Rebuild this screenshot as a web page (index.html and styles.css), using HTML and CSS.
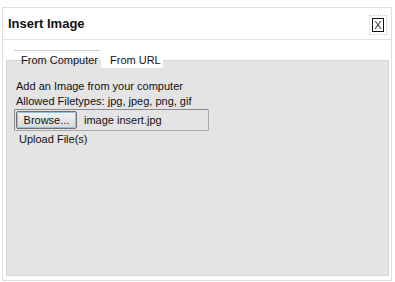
FILE: index.html
```html
<!DOCTYPE html>
<html lang="en">
<head>
  <meta charset="UTF-8" />
  <title>Insert Image</title>
  <link rel="stylesheet" href="styles.css">
</head>
<body>
  <div class="dialog">
    <div class="header">
      <h1>Insert Image</h1>
      <button class="fechar">X</button>
    </div>
    <div class="corpo">
      <div class="abas">
        <span class="aba ativa">From Computer</span>
        <span class="aba">From URL</span>
      </div>
      <div class="painel">
        <p>Add an Image from your computer</p>
        <p>Allowed Filetypes: jpg, jpeg, png, gif</p>
        <div class="arquivo">
          <button class="browse">Browse...</button>
          <span class="nome">image insert.jpg</span>
        </div>
        <p class="upload">Upload File(s)</p>
      </div>
    </div>
  </div>
</body>
</html>
```

FILE: styles.css
```css
body {
  margin: 0;
  padding: 0;
  background-color: white;
  color: #111;
  font-family: 'Liberation Sans', Arial, sans-serif;
  font-size: 11px;
}

.dialog {
  margin: 7px 3px 0 2px;
  height: 274px;
  border: 1px solid #dedede;
  box-sizing: border-box;
  display: flex;
  flex-direction: column;
}

.header {
  height: 31px;
  display: flex;
  align-items: center;
  justify-content: space-between;
  padding: 0 7px 0 5px;
  border-bottom: 1px solid #e2e2e2;
}

.header h1 {
  margin: 0;
  font-size: 13px;
  font-weight: bold;
  color: #111;
}

.fechar {
  width: 12px;
  height: 14px;
  padding: 0;
  border: 1px solid #111;
  background: white;
  font-family: 'Liberation Sans', Arial, sans-serif;
  font-size: 11px;
  line-height: 12px;
  color: #333;
  outline: 1px dotted #ccc;
  outline-offset: 2px;
  margin-top: 2px;
}

.corpo {
  flex: 1;
  padding: 10px 2px 4px 3px;
  display: flex;
  flex-direction: column;
}

.abas {
  display: flex;
  padding-left: 8px;
  height: 18px;
  margin-bottom: -8px;
  position: relative;
}

.aba {
  padding: 3px 0 0 0;
  border-top: 1px solid #cfcfcf;
  box-sizing: border-box;
  white-space: nowrap;
  color: #111;
}

.aba.ativa {
  width: 86px;
  padding-left: 7px;
}

.aba + .aba {
  width: 62px;
  margin-left: 1px;
  background: white;
  border-top-color: white;
  padding-left: 9px;
}

.painel {
  flex: 1;
  background-color: #e4e4e4;
  border: 1px solid #d6d6d6;
  padding: 18px 9px 0 9px;
}

.painel p {
  margin: 0;
  line-height: 15px;
}

.arquivo {
  display: flex;
  align-items: center;
  width: 195px;
  height: 22px;
  box-sizing: border-box;
  margin: 0 0 0 -2px;
  padding: 0 1px;
  border: 1px solid #8a8a8a;
  border-bottom-color: #a8a8a8;
  border-right-color: #a8a8a8;
  border-radius: 2px;
}

.browse {
  width: 61px;
  height: 18px;
  padding: 0;
  border: 1px solid #707070;
  border-radius: 2px;
  background: linear-gradient(#f4f4f4, #e6e6e6 50%, #d8d8d8);
  box-shadow: inset 0 0 0 1px #fafafa;
  outline: 1px solid #8fc2e0;
  outline-offset: -2px;
  font-family: 'Liberation Sans', Arial, sans-serif;
  font-size: 11px;
  color: #111;
}

.nome {
  margin-left: 7px;
}

.painel .upload {
  margin: 1px 0 0 3px;
}
```
